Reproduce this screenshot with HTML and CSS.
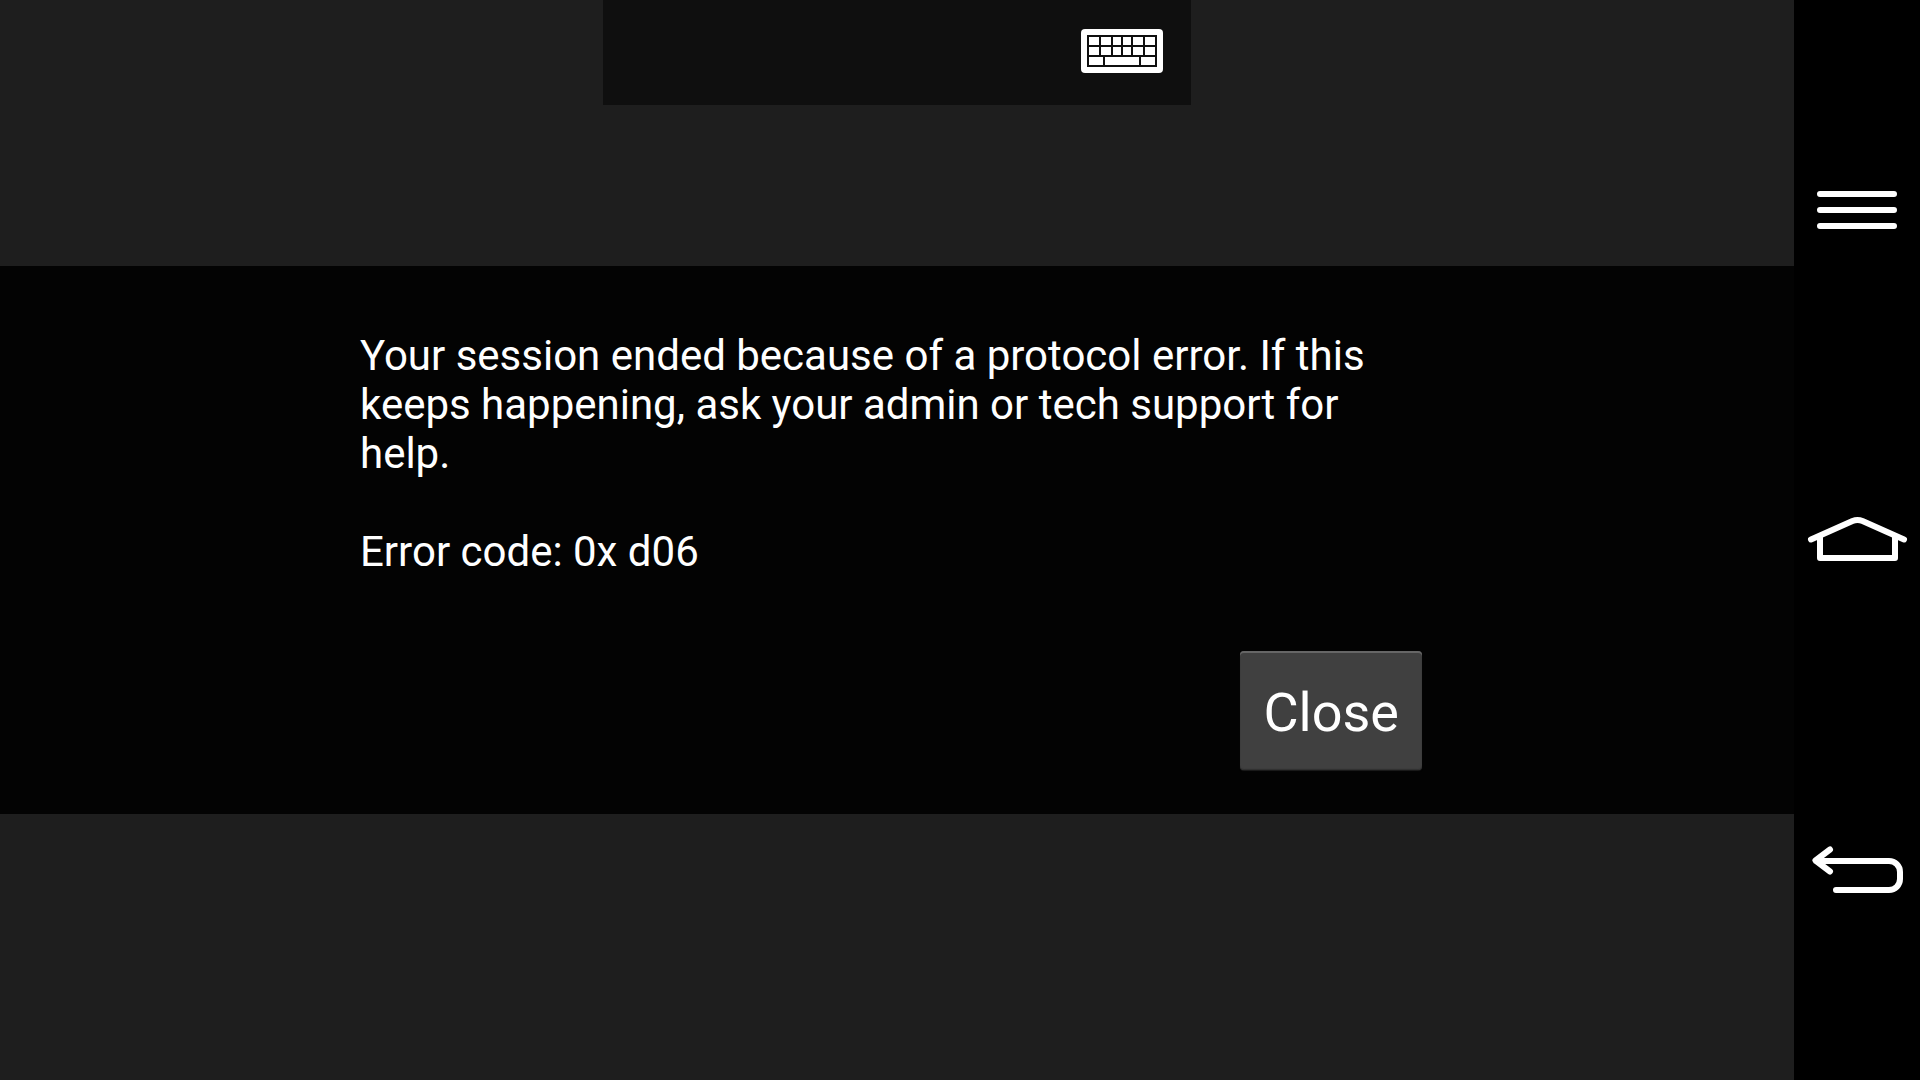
FILE: index.html
```html
<!DOCTYPE html>
<html lang="en">
<head>
<meta charset="utf-8">
<meta name="viewport" content="width=device-width, initial-scale=1">
<title>Remote session</title>
<link rel="stylesheet" href="styles.css">
</head>
<body>
<div class="device">
  <div class="screen">
    <header class="top-area">
      <div class="connection-bar">
        <button class="icon-button" type="button" aria-label="Show keyboard">
          <svg class="keyboard-icon" viewBox="0 0 82 44">
            <rect width="82" height="44" rx="4" fill="#fff"/>
            <rect x="6" y="6" width="70" height="32" fill="#0f0f0f"/>
            <path fill="#fff" d="M8 8h10v8H8zM20 8h10v8H20zM32 8h8v8h-8zM42 8h8v8h-8zM52 8h10v8H52zM64 8h10v8H64zM8 18h10v8H8zM20 18h10v8H20zM32 18h8v8h-8zM42 18h8v8h-8zM52 18h10v8H52zM64 18h10v8H64zM8 28h14v8H8zM24 28h34v8H24zM60 28h14v8H60z"/>
          </svg>
        </button>
      </div>
    </header>
    <main class="dialog" role="alertdialog" aria-describedby="message">
      <div class="dialog-content">
        <div class="message" id="message">
          <p>Your session ended because of a protocol error. If this keeps happening, ask your admin or tech support for help.</p>
          <p>Error code: 0x d06</p>
        </div>
        <div class="actions">
          <button class="close-button" type="button">Close</button>
        </div>
      </div>
    </main>
    <div class="bottom-area"></div>
  </div>
  <nav class="nav-bar" aria-label="System navigation">
    <button class="icon-button nav-button" type="button" aria-label="Menu">
      <svg class="nav-icon" viewBox="0 0 126 90">
        <path d="M26 29h74M26 45h74M26 61h74"/>
      </svg>
    </button>
    <button class="icon-button nav-button" type="button" aria-label="Home">
      <svg class="nav-icon" viewBox="0 0 126 90">
        <path d="M17 44.5L58.500 26Q63.500 24 68.500 26L110 44.500M26 41V63H101V41"/>
      </svg>
    </button>
    <button class="icon-button nav-button" type="button" aria-label="Back">
      <svg class="nav-icon" viewBox="0 0 126 90">
        <path d="M36 24.500L21.500 35.500L36 46.500M22 36H95A11 11 0 0 1 106 47V54A11 11 0 0 1 95 65H42"/>
        <path class="arrow-tip" d="M18.500 35.500L30 28V44Z"/>
      </svg>
    </button>
  </nav>
</div>
</body>
</html>
```
FILE: styles.css
```css
* {
  box-sizing: border-box;
}

body {
  margin: 0;
  background: #1e1e1e;
  color: #fff;
  font-family: Roboto, "Noto Sans", sans-serif;
}

.device {
  display: flex;
  min-height: 100vh;
}

.screen {
  flex: 1;
  min-width: 0;
  display: flex;
  flex-direction: column;
}

.top-area,
.bottom-area {
  flex: 1 0 0;
}

.connection-bar {
  display: flex;
  justify-content: flex-end;
  align-items: center;
  width: 588px;
  max-width: 100%;
  height: 105px;
  margin: 0 auto;
  padding: 0 28px 4px;
  background: #0f0f0f;
}

.icon-button {
  padding: 0;
  border: 0;
  background: none;
  cursor: pointer;
}

.icon-button svg {
  display: block;
}

.keyboard-icon {
  width: 82px;
  height: 44px;
}

.dialog {
  padding: 65px 24px 44px;
  background: #030303;
}

.dialog-content {
  max-width: 1074px;
  margin: 0 auto;
}

.message {
  font-size: 42px;
  line-height: 49px;
}

.message p {
  margin: 0;
}

.message p + p {
  margin-top: 49px;
}

.actions {
  display: flex;
  justify-content: flex-end;
  margin-top: 75px;
  padding-right: 12px;
}

.close-button {
  height: 119px;
  padding: 4px 23px 0;
  border: 0;
  border-radius: 4px;
  background: #404040;
  box-shadow: inset 0 2px 0 #666, inset 0 -1px 1px #303030, 0 1px 1px #1c1c1c;
  color: #fff;
  font-family: inherit;
  font-size: 54px;
  cursor: pointer;
}

.nav-bar {
  display: flex;
  flex-direction: column;
  flex: 0 0 126px;
  padding: 45px 0;
  background: #000;
}

.nav-button {
  flex: 1;
}

.nav-icon {
  width: 126px;
  height: 90px;
  fill: none;
  stroke: #fff;
  stroke-width: 6;
  stroke-linecap: round;
  stroke-linejoin: round;
}

.arrow-tip {
  fill: #fff;
  stroke: none;
}
```
